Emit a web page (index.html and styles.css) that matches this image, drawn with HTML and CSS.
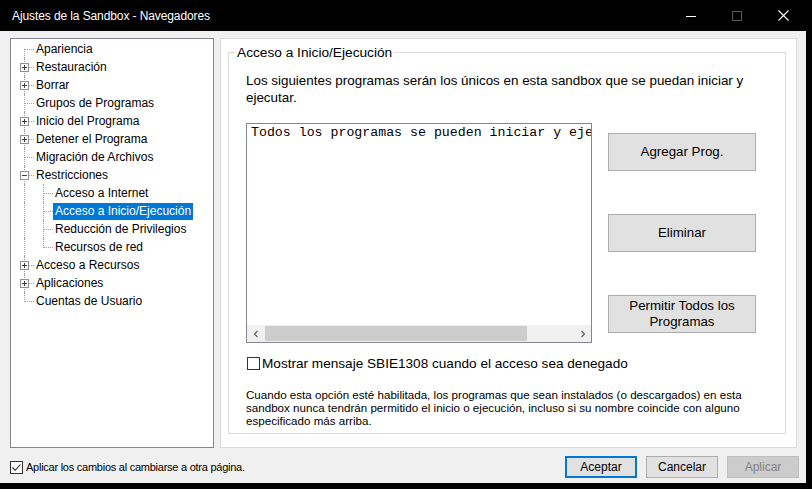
FILE: index.html
```html
<!DOCTYPE html>
<html lang="es">
<head>
<meta charset="utf-8">
<title>Ajustes de la Sandbox - Navegadores</title>
<link rel="stylesheet" href="styles.css">
</head>
<body>
<div class="screen">
  <div class="window">
    <div class="titlebar">
      <span class="title">Ajustes de la Sandbox - Navegadores</span>
      <div class="controls">
        <span class="ctl"><svg width="10" height="10" viewBox="0 0 10 10"><path d="M0 5.5H10" stroke="#fff" stroke-width="1"/></svg></span>
        <span class="ctl"><svg width="10" height="10" viewBox="0 0 10 10"><rect x="0.5" y="0.5" width="9" height="9" fill="none" stroke="#5a5a5a" stroke-width="1"/></svg></span>
        <span class="ctl"><svg width="11" height="11" viewBox="0 0 11 11"><path d="M0.5 0.5L10.5 10.5M10.5 0.5L0.5 10.5" stroke="#fff" stroke-width="1.1"/></svg></span>
      </div>
    </div>
    <div class="client">
      <div class="panes">
        <div class="tree">
          <div class="row"><span class="cell first"></span><span class="lbl">Apariencia</span></div>
          <div class="row"><span class="cell"><span class="box plus"></span></span><span class="lbl">Restauración</span></div>
          <div class="row"><span class="cell"><span class="box plus"></span></span><span class="lbl">Borrar</span></div>
          <div class="row"><span class="cell"></span><span class="lbl">Grupos de Programas</span></div>
          <div class="row"><span class="cell"><span class="box plus"></span></span><span class="lbl">Inicio del Programa</span></div>
          <div class="row"><span class="cell"><span class="box plus"></span></span><span class="lbl">Detener el Programa</span></div>
          <div class="row"><span class="cell"></span><span class="lbl">Migración de Archivos</span></div>
          <div class="row"><span class="cell"><span class="box"></span></span><span class="lbl">Restricciones</span></div>
          <div class="row"><span class="cell pipe"></span><span class="cell"></span><span class="lbl">Acceso a Internet</span></div>
          <div class="row"><span class="cell pipe"></span><span class="cell"></span><span class="lbl sel">Acceso a Inicio/Ejecución</span></div>
          <div class="row"><span class="cell pipe"></span><span class="cell"></span><span class="lbl">Reducción de Privilegios</span></div>
          <div class="row"><span class="cell pipe"></span><span class="cell last"></span><span class="lbl">Recursos de red</span></div>
          <div class="row"><span class="cell"><span class="box plus"></span></span><span class="lbl">Acceso a Recursos</span></div>
          <div class="row"><span class="cell"><span class="box plus"></span></span><span class="lbl">Aplicaciones</span></div>
          <div class="row"><span class="cell last"></span><span class="lbl">Cuentas de Usuario</span></div>
        </div>
        <div class="page">
          <fieldset class="group">
            <legend>Acceso a Inicio/Ejecución</legend>
            <div class="groupbody">
              <p class="desc">Los siguientes programas serán los únicos en esta sandbox que se puedan iniciar y<br>ejecutar.</p>
              <div class="listrow">
                <div class="listbox">
                  <div class="listtext">Todos los programas se pueden iniciar y ejecutar</div>
                  <div class="hscroll">
                    <span class="arrow"><svg width="8" height="8" viewBox="0 0 8 8"><path d="M5.5 1L2.5 4L5.5 7" fill="none" stroke="#606060" stroke-width="1.2"/></svg></span>
                    <span class="thumb"></span>
                    <span class="track"></span>
                    <span class="arrow"><svg width="8" height="8" viewBox="0 0 8 8"><path d="M2.5 1L5.5 4L2.5 7" fill="none" stroke="#606060" stroke-width="1.2"/></svg></span>
                  </div>
                </div>
                <div class="btncol">
                  <button class="btn big">Agregar Prog.</button>
                  <button class="btn big">Eliminar</button>
                  <button class="btn big">Permitir Todos los<br>Programas</button>
                </div>
              </div>
              <div class="chkrow">
                <span class="chkbox"></span>
                <span class="chklbl">Mostrar mensaje SBIE1308 cuando el acceso sea denegado</span>
              </div>
              <p class="note">Cuando esta opción esté habilitada, los programas que sean instalados (o descargados) en esta<br>sandbox nunca tendrán permitido el inicio o ejecución, incluso si su nombre coincide con alguno<br>especificado más arriba.</p>
            </div>
          </fieldset>
        </div>
      </div>
      <div class="footer">
        <div class="applychk">
          <span class="chkbox checked"><svg width="11" height="11" viewBox="0 0 11 11"><path d="M1.5 5.5L4.2 8.3L9.5 2.5" fill="none" stroke="#222" stroke-width="1.1"/></svg></span>
          <span class="applylbl">Aplicar los cambios al cambiarse a otra página.</span>
        </div>
        <div class="dlgbtns">
          <button class="btn small default">Aceptar</button>
          <button class="btn small">Cancelar</button>
          <button class="btn small disabled">Aplicar</button>
        </div>
      </div>
    </div>
  </div>
</div>
</body>
</html>
```

FILE: styles.css
```css
* { box-sizing: border-box; }
html, body { margin: 0; padding: 0; background: #000; }
body { font-family: "Liberation Sans", Arial, sans-serif; color: #000; }

.screen {
  width: 812px;
  height: 489px;
  background: #000;
  overflow: hidden;
}
.window {
  width: 806px;
  height: 483px;
  display: flex;
  flex-direction: column;
}
.titlebar {
  height: 31px;
  background: #000;
  color: #fff;
  display: flex;
  align-items: center;
  padding-left: 12px;
  flex: none;
}
.title { font-size: 12px; letter-spacing: -0.1px; flex: 1; }
.controls { display: flex; height: 31px; }
.ctl {
  width: 46px;
  height: 31px;
  display: flex;
  align-items: center;
  justify-content: center;
}

.client {
  flex: 1;
  background: #f0f0f0;
  padding: 7px 9px 0 10px;
  display: flex;
  flex-direction: column;
}
.panes {
  display: flex;
  gap: 6px;
  height: 410px;
  flex: none;
}

/* tree */
.tree {
  width: 205px;
  height: 410px;
  background: #fff;
  border: 1px solid #828790;
  padding-top: 1px;
  font-size: 12px;
  color: #000;
}
.row {
  display: flex;
  height: 18px;
  align-items: center;
  padding-left: 4px;
}
.cell {
  width: 19px;
  height: 18px;
  position: relative;
  flex: none;
}
.cell::before {
  content: "";
  position: absolute;
  left: 9px;
  top: 0;
  bottom: 0;
  border-left: 1px dotted #a0a0a0;
}
.cell::after {
  content: "";
  position: absolute;
  left: 10px;
  top: 9px;
  width: 9px;
  border-top: 1px dotted #a0a0a0;
}
.cell.first::before { top: 9px; }
.cell.last::before { bottom: 8px; }
.cell.pipe::after { display: none; }
.box {
  position: absolute;
  left: 5px;
  top: 5px;
  width: 9px;
  height: 9px;
  border: 1px solid #919191;
  background: #fff;
  z-index: 1;
}
.box::before {
  content: "";
  position: absolute;
  left: 1px;
  top: 3px;
  width: 5px;
  height: 1px;
  background: #404040;
}
.box.plus::after {
  content: "";
  position: absolute;
  left: 3px;
  top: 1px;
  width: 1px;
  height: 5px;
  background: #404040;
}
.lbl {
  padding: 0 2px;
  line-height: 17px;
  height: 17px;
  white-space: nowrap;
}
.lbl.sel { background: #0078d7; color: #fff; }

/* page */
.page {
  width: 577px;
  height: 410px;
  background: #fff;
  border: 1px solid #dadada;
  padding: 6px 10px 13px 7px;
}
.group {
  margin: 0;
  padding: 0;
  min-width: 0;
  width: 558px;
  height: 389px;
  border: 1px solid #dcdcdc;
}
.group legend {
  font-size: 13.7px;
  line-height: 15px;
  padding: 0 2px;
  margin-left: 6px;
}
.groupbody { padding-left: 17px; }
.desc {
  margin: 12px 0 0;
  font-size: 13.4px;
  line-height: 17px;
  white-space: nowrap;
}
.listrow {
  display: flex;
  gap: 16px;
  margin-top: 17px;
}
.listbox {
  width: 346px;
  height: 220px;
  border: 1px solid #828790;
  display: flex;
  flex-direction: column;
  background: #fff;
}
.listtext {
  flex: 1;
  overflow: hidden;
  white-space: nowrap;
  padding: 1px 0 0 4px;
  font-family: "Liberation Mono", "Courier New", monospace;
  font-size: 13.25px;
  line-height: 15px;
}
.hscroll {
  height: 17px;
  background: #f0f0f0;
  display: flex;
  flex: none;
}
.arrow {
  width: 17px;
  height: 17px;
  display: flex;
  align-items: center;
  justify-content: center;
  flex: none;
}
.arrow:first-child { width: 18px; }
.thumb {
  width: 262px;
  height: 15px;
  margin-top: 1px;
  background: #cdcdcd;
}
.track { flex: 1; }

.btncol {
  display: flex;
  flex-direction: column;
  gap: 43px;
  padding-top: 10px;
}
.btn {
  font-family: "Liberation Sans", Arial, sans-serif;
  background: #e1e1e1;
  border: 1px solid #adadad;
  color: #000;
  padding: 0;
  border-radius: 0;
}
.btn.big {
  width: 148px;
  height: 38px;
  font-size: 13.3px;
  line-height: 16px;
}
.chkrow {
  display: flex;
  align-items: center;
  gap: 2px;
  height: 13px;
  margin-top: 14px;
  padding-left: 1px;
}
.chkbox {
  width: 13px;
  height: 13px;
  border: 1px solid #333;
  background: #fff;
  flex: none;
  display: flex;
  align-items: center;
  justify-content: center;
}
.chklbl { font-size: 13.6px; line-height: 15px; white-space: nowrap; }
.note {
  margin: 18px 0 0;
  font-size: 11.6px;
  line-height: 13px;
  white-space: nowrap;
}

/* footer */
.footer {
  flex: 1;
  display: flex;
  align-items: center;
  justify-content: space-between;
  padding-top: 3px;
  margin-right: -2px;
}
.applychk { display: flex; align-items: center; gap: 3px; }
.applylbl { font-size: 11px; letter-spacing: -0.25px; }
.dlgbtns { display: flex; gap: 9px; }
.btn.small {
  width: 72px;
  height: 22px;
  font-size: 12px;
}
.btn.default {
  border-color: #0078d7;
  box-shadow: inset 0 0 0 1px #0078d7;
}
.btn.disabled {
  background: #cccccc;
  border-color: #bfbfbf;
  color: #838383;
}
```
